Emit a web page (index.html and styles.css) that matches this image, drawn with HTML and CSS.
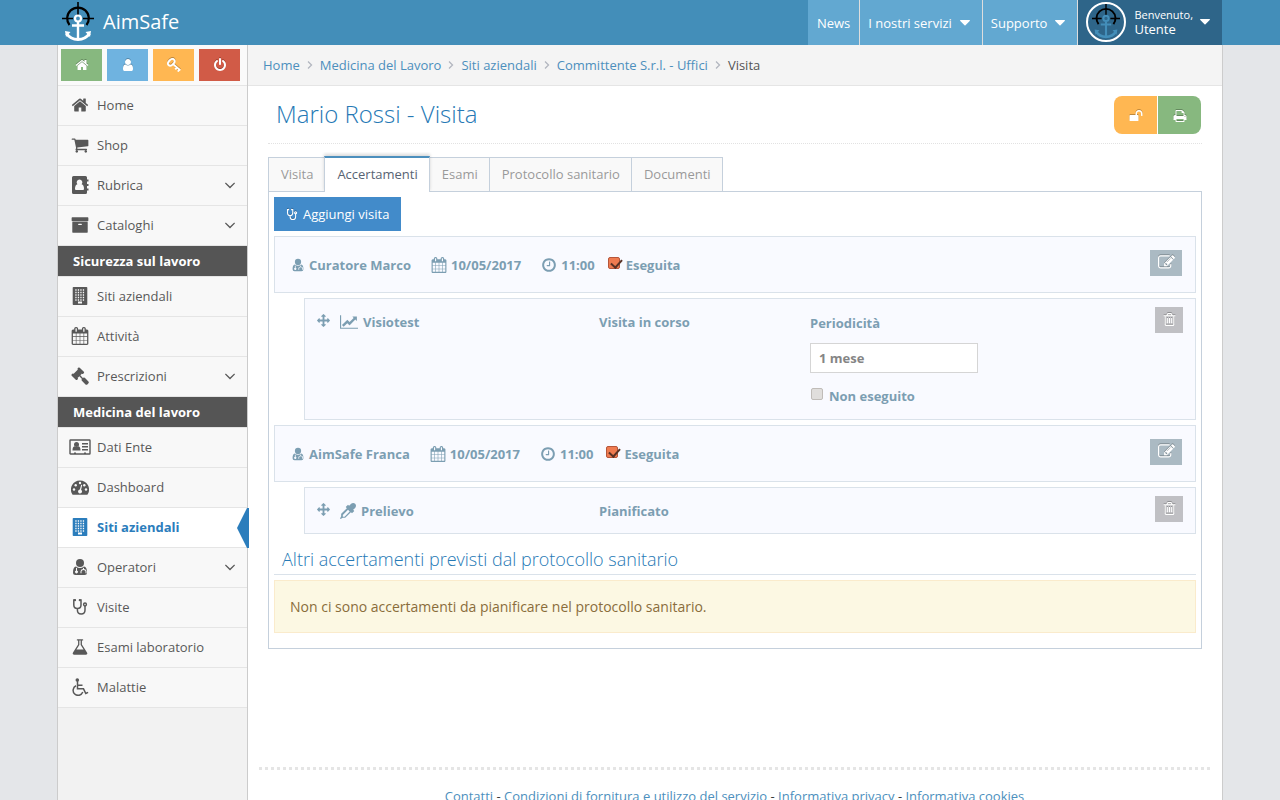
FILE: index.html
```html
<!DOCTYPE html>
<html lang="it">
<head>
<meta charset="utf-8">
<meta name="viewport" content="width=device-width, initial-scale=1">
<title>AimSafe - Visita</title>
<link rel="stylesheet" href="styles.css">
</head>
<body>
<svg class="sprite" aria-hidden="true">
  <symbol id="home" viewBox="0 0 1792 1792"><path d="M1472 992v480q0 26-19 45t-45 19h-384v-384h-256v384h-384q-26 0-45-19t-19-45v-480q0-1 .5-3t.5-3l575-474 575 474q1 2 1 6zm223-69l-62 74q-8 9-21 11h-3q-13 0-21-7l-692-577-692 577q-12 8-24 7-13-2-21-11l-62-74q-8-10-7-23.5t11-21.5l719-599q32-26 76-26t76 26l244 204v-195q0-14 9-23t23-9h192q14 0 23 9t9 23v408l219 182q10 8 11 21.5t-7 23.5z"/></symbol>
  <symbol id="user" viewBox="0 0 1792 1792"><path d="M1536 1399q0 109-62.5 187t-150.5 78h-854q-88 0-150.5-78t-62.5-187q0-85 8.500-160.500t31.500-152 58.500-131 94-89 134.500-34.500q131 128 313 128t313-128q76 0 134.500 34.500t94 89 58.500 131 31.500 152 8.500 160.500zm-256-887q0 159-112.500 271.500t-271.500 112.500-271.500-112.500-112.500-271.500 112.500-271.500 271.500-112.500 271.500 112.500 112.500 271.500z"/></symbol>
  <symbol id="key" viewBox="0 0 15 15"><g fill="none" stroke="currentColor" stroke-width="2"><ellipse cx="4.600" cy="4.600" rx="4.100" ry="2.700" transform="rotate(-45 4.600 4.600)"/><path d="M6 6l8.300 7.300M8.800 12.200l2.500-2.800M11.500 14.500l2.500-2.800"/></g></symbol>
  <symbol id="power" viewBox="0 0 1792 1792"><path d="M1664 896q0 156-61 298t-164 245-245 164-298 61-298-61-245-164-164-245-61-298q0-182 80.500-343t226.500-270q43-32 95.500-25t83.500 50q32 42 24.500 94.500t-49.500 84.500q-98 74-151.500 181t-53.500 228q0 104 40.500 198.500t109.500 163.500 163.500 109.500 198.500 40.500 198.500-40.500 163.500-109.500 109.500-163.500 40.500-198.500q0-121-53.500-228t-151.500-181q-42-32-49.500-84.500t24.500-94.500q31-43 84-50t95 25q146 109 226.500 270t80.500 343zm-640-768v640q0 52-38 90t-90 38-90-38-38-90v-640q0-52 38-90t90-38 90 38 38 90z"/></symbol>
  <symbol id="cart" viewBox="0 0 1792 1792"><path d="M704 1536q0 52-38 90t-90 38-90-38-38-90 38-90 90-38 90 38 38 90zm896 0q0 52-38 90t-90 38-90-38-38-90 38-90 90-38 90 38 38 90zm128-1088v512q0 24-16.500 42.500t-40.500 21.500l-1044 122q13 60 13 70 0 16-24 64h920q26 0 45 19t19 45-19 45-45 19h-1024q-26 0-45-19t-19-45q0-11 8-31.500t16-36 21.500-40 15.500-29.500l-177-823h-204q-26 0-45-19t-19-45 19-45 45-19h256q16 0 28.500 6.500t19.500 15.500 13 24.500 8 26 5.500 29.500 4.500 26h1201q26 0 45 19t19 45z"/></symbol>
  <symbol id="book" viewBox="0 0 18 18"><path fill-rule="evenodd" d="M2.500 0h12a1.500 1.500 0 0 1 1.500 1.500v15a1.500 1.500 0 0 1-1.500 1.500h-12a1.500 1.500 0 0 1-1.500-1.500v-15a1.500 1.500 0 0 1 1.500-1.500zM8.500 3.500a2.800 2.800 0 0 0-2.100 4.700q-2.400.5-2.400 4.800 0 1 1 1h7q1 0 1-1 0-4.300-2.400-4.800a2.800 2.800 0 0 0-2.100-4.700z"/><path d="M16 3.500h1.500v2h-1.500zM16 8h1.500v2h-1.500zM16 12.500h1.500v2h-1.500z"/></symbol>
  <symbol id="archive" viewBox="0 0 1792 1792"><path d="M1088 832q0-26-19-45t-45-19h-256q-26 0-45 19t-19 45 19 45 45 19h256q26 0 45-19t19-45zm576-192v960q0 26-19 45t-45 19h-1408q-26 0-45-19t-19-45v-960q0-26 19-45t45-19h1408q26 0 45 19t19 45zm64-448v256q0 26-19 45t-45 19h-1536q-26 0-45-19t-19-45v-256q0-26 19-45t45-19h1536q26 0 45 19t19 45z"/></symbol>
  <symbol id="building" viewBox="0 0 18 18"><path fill-rule="evenodd" d="M2.500 0h13a.8.8 0 0 1 .8.800v16.400a.8.800 0 0 1-.8.800h-13a.8.800 0 0 1-.8-.8v-16.400a.8.800 0 0 1 .8-.8zM7 14.500v2h4v-2z"/><path stroke="var(--hole)" stroke-width="1.300" stroke-dasharray="1.300 1.200" d="M4.300 3h10M4.300 5.500h10M4.300 8h10M4.300 10.500h10M4.300 13h10"/></symbol>
  <symbol id="calendar" viewBox="0 0 1792 1792"><path d="M192 1664h288v-288h-288v288zm352 0h320v-288h-320v288zm-352-352h288v-320h-288v320zm352 0h320v-320h-320v320zm-352-384h288v-288h-288v288zm736 736h320v-288h-320v288zm-384-736h320v-288h-320v288zm768 736h288v-288h-288v288zm-384-352h320v-320h-320v320zm-352-864v-288q0-13-9.500-22.500t-22.500-9.500h-64q-13 0-22.500 9.500t-9.500 22.500v288q0 13 9.500 22.500t22.500 9.500h64q13 0 22.500-9.500t9.500-22.500zm736 864h288v-320h-288v320zm-384-384h320v-288h-320v288zm384 0h288v-288h-288v288zm32-480v-288q0-13-9.500-22.500t-22.500-9.500h-64q-13 0-22.500 9.500t-9.500 22.500v288q0 13 9.500 22.500t22.500 9.500h64q13 0 22.500-9.500t9.500-22.500zm384-64v1280q0 52-38 90t-90 38h-1408q-52 0-90-38t-38-90v-1280q0-52 38-90t90-38h128v-96q0-66 47-113t113-47h64q66 0 113 47t47 113v96h384v-96q0-66 47-113t113-47h64q66 0 113 47t47 113v96h128q52 0 90 38t38 90z"/></symbol>
  <symbol id="gavel" viewBox="0 0 1792 1792"><path d="M1771 1536q0 53-37 90l-107 108q-39 37-91 37-53 0-90-37l-363-364q-38-36-38-90 0-53 43-96l-256-256-126 126q-14 14-34 14t-34-14q2 2 12.500 12t12.500 13 10 11.500 10 13.500 6 13.500 5.500 16.500 1.500 18q0 38-28 68-3 3-16.500 18t-19 20.500-18.500 16.500-22 15.500-22 9-26 4.500q-40 0-68-28l-408-408q-28-28-28-68 0-13 4.500-26t9-22 15.500-22 16.500-18.500 20.500-19 18-16.500q30-28 68-28 10 0 18 1.500t16.500 5.500 13.500 6 13.500 10 11.500 10 13 12.500 12 12.500q-14-14-14-34t14-34l348-348q14-14 34-14t34 14q-2-2-12.500-12t-12.500-13-10-11.500-10-13.500-6-13.500-5.500-16.500-1.500-18q0-38 28-68 3-3 16.500-18t19-20.500 18.500-16.500 22-15.500 22-9 26-4.500q40 0 68 28l408 408q28 28 28 68 0 13-4.500 26t-9 22-15.500 22-16.500 18.500-20.500 19-18 16.500q-30 28-68 28-10 0-18-1.500t-16.500-5.500-13.500-6-13.500-10-11.500-10-13-12.500-12-12.500q14 14 14 34t-14 34l-126 126 256 256q43-43 96-43 52 0 91 37l363 363q37 39 37 91z"/></symbol>
  <symbol id="idcard" viewBox="0 0 22 18"><path fill="none" stroke="currentColor" stroke-width="1.400" d="M1.500 2h19q.5 0 .5.500v13q0 .5-.5.500h-19q-.5 0-.5-.5v-13q0-.5.500-.5z"/><circle cx="7.500" cy="6.500" r="2.500"/><path d="M3.500 12.500q0-4 2-4.300 2 1.500 4 0 2 .3 2 4.300zM13 5h6v1.500h-6zM13 8h6v1.500h-6zM13 11h6v1.500h-6zM5 14.500h2v1.500h-2zM15 14.500h2v1.500h-2z"/></symbol>
  <symbol id="gauge" viewBox="0 0 18 18"><path d="M9 2.500a9 9 0 0 1 7.700 13.700q-.3.500-.8.500h-13.800q-.5 0-.8-.5a9 9 0 0 1 7.700-13.700z"/><g fill="var(--hole)"><circle cx="3" cy="11.500" r="1.200"/><circle cx="4.700" cy="7.200" r="1.200"/><circle cx="9" cy="5" r="1.200"/><circle cx="13.300" cy="7.200" r="1.200"/><circle cx="15" cy="11.500" r="1.200"/><path d="M10.200 6.800l1 .3-1.100 4.700a2 2 0 1 1-1.200-.3z"/></g></symbol>
  <symbol id="doctor" viewBox="0 0 16 18"><circle cx="8" cy="5" r="4"/><path fill-rule="evenodd" d="M4 8.500q4 3.200 8 0 3 .5 3 6 0 2.500-2.500 2.500h-9q-2.500 0-2.500-2.500 0-5.500 3-6zM4 9.800v2.600a1.500 1.500 0 1 0 1 0v-2.300zM11 9.800v1.300q-2.500.3-2.500 2.400v1.700h1v-1.700q0-1.500 2-1.500t2 1.500v1.700h1v-1.700q0-2.100-2.500-2.400v-1z"/></symbol>
  <symbol id="stetho" viewBox="0 0 16 18"><g fill="none" stroke="currentColor" stroke-width="1.500"><path d="M3.500 2h-1.700v5q0 3.500 3.600 3.500t3.600-3.500v-5h-1.700M5.400 10.500v1.500q0 4 3.800 4t3.800-4v-4"/><circle cx="13" cy="6.500" r="1.400"/></g><circle cx="3" cy="2.200" r="1.100"/><circle cx="7.800" cy="2.200" r="1.100"/></symbol>
  <symbol id="flask" viewBox="0 0 1792 1792"><path d="M1591 1448q56 89 21.500 152.500t-140.500 63.500h-1152q-106 0-140.500-63.500t21.500-152.500l503-793v-399h-64q-26 0-45-19t-19-45 19-45 45-19h512q26 0 45 19t19 45-19 45-45 19h-64v399zm-779-725l-272 429h712l-272-429-20-31v-436h-128v436z"/></symbol>
  <symbol id="wheelchair" viewBox="0 0 18 18"><circle cx="6.300" cy="2" r="1.800"/><g fill="none" stroke="currentColor" stroke-width="1.500"><path d="M6.500 3v7.800h6l2.300 4.700 2.300-1.100M6.500 7.200h5M5 7.800a5 5 0 1 0 6.800 6.300"/></g></symbol>
  <symbol id="down" viewBox="0 0 1792 1792"><path d="M1395 736q0 13-10 23l-466 466q-10 10-23 10t-23-10l-466-466q-10-10-10-23t10-23l50-50q10-10 23-10t23 10l393 393 393-393q10-10 23-10t23 10l50 50q10 10 10 23z"/></symbol>
  <symbol id="right" viewBox="0 0 8 14"><path fill="none" stroke="currentColor" stroke-width="1.300" d="M2 3.500l3.500 3.500-3.500 3.500"/></symbol>
  <symbol id="caret" viewBox="0 0 10 6"><path d="M.5 0h9q.8.300.2 1l-4.200 4.200q-.5.400-1 0l-4.200-4.200q-.6-.7.200-1z"/></symbol>
  <symbol id="clock" viewBox="0 0 1792 1792"><path d="M1024 544v448q0 14-9 23t-23 9h-320q-14 0-23-9t-9-23v-64q0-14 9-23t23-9h224v-352q0-14 9-23t23-9h64q14 0 23 9t9 23zm416 352q0-148-73-273t-198-198-273-73-273 73-198 198-73 273 73 273 198 198 273 73 273-73 198-198 73-273zm224 0q0 209-103 385.500t-279.500 279.500-385.500 103-385.500-103-279.500-279.500-103-385.500 103-385.500 279.500-279.500 385.500-103 385.500 103 279.500 279.500 103 385.500z"/></symbol>
  <symbol id="move" viewBox="0 0 1792 1792"><path d="M1792 896q0 26-19 45l-256 256q-19 19-45 19t-45-19-19-45v-128h-384v384h128q26 0 45 19t19 45-19 45l-256 256q-19 19-45 19t-45-19l-256-256q-19-19-19-45t19-45 45-19h128v-384h-384v128q0 26-19 45t-45 19-45-19l-256-256q-19-19-19-45t19-45l256-256q19-19 45-19t45 19 19 45v128h384v-384h-128q-26 0-45-19t-19-45 19-45l256-256q19-19 45-19t45 19l256 256q19 19 19 45t-19 45-45 19h-128v384h384v-128q0-26 19-45t45-19 45 19l256 256q19 19 19 45z"/></symbol>
  <symbol id="chart" viewBox="0 0 2048 1792"><path d="M2048 1536v128h-2048v-1536h128v1408h1920zm-128-1248v435q0 21-19.500 29.500t-35.500-7.500l-121-121-633 633q-10 10-23 10t-23-10l-233-233-416 416-192-192 585-585q10-10 23-10t23 10l233 233 464-464-121-121q-16-16-7.500-35.500t29.500-19.500h435q14 0 23 9t9 23z"/></symbol>
  <symbol id="dropper" viewBox="0 0 1792 1792"><path d="M1698 94q94 94 94 226.500t-94 225.500l-225 223 104 104q10 10 10 23t-10 23l-210 210q-10 10-23 10t-23-10l-105-105-603 603q-37 37-90 37h-203l-256 128-64-64 128-256v-203q0-53 37-90l603-603-105-105q-10-10-10-23t10-23l210-210q10-10 23-10t23 10l104 104 223-225q93-94 225.500-94t226.500 94zm-1186 1442l576-576-192-192-576 576v192h192z"/></symbol>
  <symbol id="trash" viewBox="0 0 1792 1792"><path d="M704 736v576q0 14-9 23t-23 9h-64q-14 0-23-9t-9-23v-576q0-14 9-23t23-9h64q14 0 23 9t9 23zm256 0v576q0 14-9 23t-23 9h-64q-14 0-23-9t-9-23v-576q0-14 9-23t23-9h64q14 0 23 9t9 23zm256 0v576q0 14-9 23t-23 9h-64q-14 0-23-9t-9-23v-576q0-14 9-23t23-9h64q14 0 23 9t9 23zm128 724v-948h-896v948q0 22 7 40.500t14.500 27 10.500 8.500h832q3 0 10.500-8.500t14.500-27 7-40.500zm-672-1076h448l-48-117q-7-9-17-11h-317q-10 2-17 11zm928 32v64q0 14-9 23t-23 9h-96v948q0 83-47 143.500t-113 60.500h-832q-66 0-113-58.500t-47-141.500v-952h-96q-14 0-23-9t-9-23v-64q0-14 9-23t23-9h309l70-167q15-37 54-63t79-26h320q40 0 79 26t54 63l70 167h309q14 0 23 9t9 23z"/></symbol>
  <symbol id="edit" viewBox="0 0 1792 1792"><path d="M888 1184l116-116-152-152-116 116v56h96v96h56zm440-720q-16-16-33 1l-350 350q-17 17-1 33t33-1l350-350q17-17 1-33zm80 594v190q0 119-84.500 203.500t-203.500 84.500h-832q-119 0-203.500-84.500t-84.500-203.500v-832q0-119 84.500-203.500t203.500-84.500h832q63 0 117 25 15 7 18 23 3 17-9 29l-49 49q-14 14-32 8-23-6-45-6h-832q-66 0-113 47t-47 113v832q0 66 47 113t113 47h832q66 0 113-47t47-113v-126q0-13 9-22l64-64q15-15 35-7t20 29zm-96-738l288 288-672 672h-288v-288zm444 132l-92 92-288-288 92-92q28-28 68-28t68 28l152 152q28 28 28 68t-28 68z"/></symbol>
  <symbol id="print" viewBox="0 0 1792 1792"><path d="M448 1536h896v-256h-896v256zm0-640h896v-384h-160q-40 0-68-28t-28-68v-160h-640v640zm1152 64q0-26-19-45t-45-19-45 19-19 45 19 45 45 19 45-19 19-45zm128 0v416q0 13-9.500 22.500t-22.500 9.500h-224v160q0 40-28 68t-68 28h-960q-40 0-68-28t-28-68v-160h-224q-13 0-22.500-9.500t-9.500-22.500v-416q0-79 56.500-135.500t135.500-56.500h64v-544q0-40 28-68t68-28h672q40 0 88 20t76 48l152 152q28 28 48 76t20 88v256h64q79 0 135.500 56.500t56.500 135.500z"/></symbol>
  <symbol id="unlock" viewBox="0 0 1792 1792"><path d="M1728 576v256q0 26-19 45t-45 19h-64q-26 0-45-19t-19-45v-256q0-106-75-181t-181-75-181 75-75 181v192h96q40 0 68 28t28 68v576q0 40-28 68t-68 28h-960q-40 0-68-28t-28-68v-576q0-40 28-68t68-28h672v-192q0-185 131.500-316.500t316.500-131.500 316.500 131.500 131.500 316.500z"/></symbol>
  <symbol id="anchor" viewBox="0 0 34 40"><g fill="none" stroke="#000"><path stroke-width="2.200" d="M8.500 23a10.800 10.800 0 1 1 17 0"/><path stroke-width="1.600" d="M17 0v13M1 16.500h11M22 16.500h11"/></g><g fill="none" stroke="currentColor"><circle cx="17" cy="16.500" r="3" stroke-width="2.200"/><path stroke-width="2.400" d="M17 20v17M11 23.500h12"/><path stroke-width="3" d="M5.500 31.500q4 6 11.500 6t11.500-6"/></g><path fill="currentColor" d="M4 29l5.500 1-4.500 5zM30 29l-5.500 1 4.500 5z"/></symbol>
</svg>

<header class="navbar">
  <div class="frame navbar-in">
    <a class="brand" href="#"><svg class="brand-logo"><use href="#anchor"/></svg>AimSafe</a>
    <nav class="topnav">
      <a href="#">News</a>
      <a href="#">I nostri servizi<svg class="caret"><use href="#caret"/></svg></a>
      <a href="#">Supporto<svg class="caret"><use href="#caret"/></svg></a>
      <a class="account" href="#">
        <span class="avatar"><svg><use href="#anchor"/></svg></span>
        <span class="who"><small>Benvenuto,</small>Utente</span>
        <svg class="caret"><use href="#caret"/></svg>
      </a>
    </nav>
  </div>
</header>

<div class="frame main">
  <aside class="sidebar">
    <div class="shortcuts">
      <button class="green" aria-label="Home"><svg class="i14"><use href="#home"/></svg></button>
      <button class="sky" aria-label="Profilo"><svg class="i14"><use href="#user"/></svg></button>
      <button class="orange" aria-label="Password"><svg class="i14"><use href="#key"/></svg></button>
      <button class="red" aria-label="Esci"><svg class="i14"><use href="#power"/></svg></button>
    </div>
    <nav class="menu">
      <a href="#"><svg><use href="#home"/></svg>Home</a>
      <a href="#"><svg><use href="#cart"/></svg>Shop</a>
      <a href="#"><svg><use href="#book"/></svg>Rubrica<svg class="more"><use href="#down"/></svg></a>
      <a href="#"><svg><use href="#archive"/></svg>Cataloghi<svg class="more"><use href="#down"/></svg></a>
      <h2>Sicurezza sul lavoro</h2>
      <a href="#"><svg><use href="#building"/></svg>Siti aziendali</a>
      <a href="#"><svg><use href="#calendar"/></svg>Attività</a>
      <a href="#"><svg><use href="#gavel"/></svg>Prescrizioni<svg class="more"><use href="#down"/></svg></a>
      <h2>Medicina del lavoro</h2>
      <a href="#"><svg class="wide"><use href="#idcard"/></svg>Dati Ente</a>
      <a href="#"><svg><use href="#gauge"/></svg>Dashboard</a>
      <a href="#" class="active"><svg><use href="#building"/></svg>Siti aziendali</a>
      <a href="#"><svg><use href="#doctor"/></svg>Operatori<svg class="more"><use href="#down"/></svg></a>
      <a href="#"><svg><use href="#stetho"/></svg>Visite</a>
      <a href="#"><svg><use href="#flask"/></svg>Esami laboratorio</a>
      <a href="#"><svg><use href="#wheelchair"/></svg>Malattie</a>
    </nav>
  </aside>

  <div class="content">
    <nav class="crumbs">
      <a href="#">Home</a><svg><use href="#right"/></svg>
      <a href="#">Medicina del Lavoro</a><svg><use href="#right"/></svg>
      <a href="#">Siti aziendali</a><svg><use href="#right"/></svg>
      <a href="#">Committente S.r.l. - Uffici</a><svg><use href="#right"/></svg>
      <span>Visita</span>
    </nav>
    <main class="page">
      <div class="page-head">
        <h1>Mario Rossi - Visita</h1>
        <div class="tools">
          <button class="orange" aria-label="Sblocca"><svg class="i14"><use href="#unlock"/></svg></button>
          <button class="green" aria-label="Stampa"><svg class="i14"><use href="#print"/></svg></button>
        </div>
      </div>
      <nav class="tabs">
        <a href="#">Visita</a>
        <a href="#" class="current">Accertamenti</a>
        <a href="#">Esami</a>
        <a href="#">Protocollo sanitario</a>
        <a href="#">Documenti</a>
      </nav>
      <section class="pane">
        <button class="add"><svg><use href="#stetho"/></svg>Aggiungi visita</button>

        <article class="visit">
          <span class="item"><svg class="i14"><use href="#doctor"/></svg>Curatore Marco</span>
          <span class="item"><svg class="i16"><use href="#calendar"/></svg>10/05/2017</span>
          <span class="item"><svg class="i16"><use href="#clock"/></svg>11:00</span>
          <label class="tick"><input type="checkbox" checked>Eseguita</label>
          <button class="edit" aria-label="Modifica"><svg><use href="#edit"/></svg></button>
        </article>
        <article class="exam">
          <div class="name"><svg class="i14"><use href="#move"/></svg><svg class="chart"><use href="#chart"/></svg>Visiotest</div>
          <div class="state">Visita in corso</div>
          <div class="period">
            <label for="periodicita">Periodicità</label>
            <input id="periodicita" type="text" value="1 mese">
            <label class="tick"><input type="checkbox">Non eseguito</label>
          </div>
          <button class="trash" aria-label="Elimina"><svg><use href="#trash"/></svg></button>
        </article>

        <article class="visit">
          <span class="item"><svg class="i14"><use href="#doctor"/></svg>AimSafe Franca</span>
          <span class="item"><svg class="i16"><use href="#calendar"/></svg>10/05/2017</span>
          <span class="item"><svg class="i16"><use href="#clock"/></svg>11:00</span>
          <label class="tick"><input type="checkbox" checked>Eseguita</label>
          <button class="edit" aria-label="Modifica"><svg><use href="#edit"/></svg></button>
        </article>
        <article class="exam">
          <div class="name"><svg class="i14"><use href="#move"/></svg><svg class="i16"><use href="#dropper"/></svg>Prelievo</div>
          <div class="state">Pianificato</div>
          <div class="period"></div>
          <button class="trash" aria-label="Elimina"><svg><use href="#trash"/></svg></button>
        </article>

        <h2 class="sub">Altri accertamenti previsti dal protocollo sanitario</h2>
        <p class="notice">Non ci sono accertamenti da pianificare nel protocollo sanitario.</p>
      </section>
    </main>
    <footer class="foot">
      <a href="#">Contatti</a> - <a href="#">Condizioni di fornitura e utilizzo del servizio</a> - <a href="#">Informativa privacy</a> - <a href="#">Informativa cookies</a>
    </footer>
  </div>
</div>
</body>
</html>
```
FILE: styles.css
```css
* { box-sizing: border-box; }
body {
  margin: 0;
  min-height: 100vh;
  display: flex;
  flex-direction: column;
  background: #e4e6e9;
  color: #393939;
  font: 13px/20px "Open Sans", sans-serif;
}
a { color: #4c8fbd; text-decoration: none; }
button { border: 0; padding: 0; color: #fff; font: inherit; cursor: pointer; }
svg { fill: currentColor; flex: none; }
.sprite { display: none; }
.i14 { width: 14px; height: 14px; }
.i16 { width: 16px; height: 16px; }
button svg { filter: drop-shadow(0 -1px 0 rgba(0, 0, 0, .25)); }
.green { background: #87b87f; }
.sky { background: #6fb3e0; }
.orange { background: #ffb752; }
.red { background: #d15b47; }

.frame { width: 100%; max-width: 1166px; margin: 0 auto; }

/* top bar */
.navbar { background: #438eb9; }
.navbar-in { display: flex; justify-content: space-between; height: 45px; padding: 0 1px; }
.brand { display: flex; align-items: center; gap: 8px; padding: 0 0 2px 3px; color: #fff; font-size: 20px; }
.brand-logo { width: 34px; height: 40px; }
.topnav { display: flex; }
.topnav a { display: flex; align-items: center; padding: 0 8px; background: #62a8d1; color: #fff; border-left: 1px solid #ddd; }
.topnav a:first-child { border-left: 0; padding: 0 9px; }
.topnav a.account { background: #2e6589; padding: 0 12px 2px 8px; }
.caret { width: 10px; height: 6px; margin: 0 4px 0 8px; }
.account .caret { margin: 0 0 0 7px; }
.avatar { display: flex; align-items: center; justify-content: center; width: 40px; height: 40px; margin-right: 8px; border: 2px solid #fff; border-radius: 50%; color: #438eb9; }
.avatar svg { width: 30px; height: 35px; }
.who { line-height: 15px; }
.who small { display: block; font-size: 11px; }

/* sidebar */
.main { flex: 1; display: flex; background: #fff; border: solid #ccc; border-width: 0 1px; }
.sidebar { width: 190px; flex: none; background: #f2f2f2; border-right: 1px solid #ccc; }
.shortcuts { display: grid; grid-template-columns: repeat(4, 41px); gap: 5px; height: 41px; padding: 4px 3px; background: #fafafa; border-bottom: 1px solid #e5e5e5; }
.shortcuts button { display: flex; align-items: center; justify-content: center; height: 32px; }
.menu { --hole: #f8f8f8; }
.menu a { display: flex; align-items: center; height: 40px; padding: 0 10px 2px 13px; background: #f8f8f8; color: #585858; border-bottom: 1px solid #e5e5e5; }
.menu svg { width: 18px; height: 18px; margin-right: 8px; }
.menu .wide { width: 22px; margin: 0 6px 0 -2px; }
.menu .more { margin: 0 -2px 0 auto; }
.menu h2 { margin: 0; padding-left: 15px; height: 31px; background: #555; border-bottom: 1px solid #e5e5e5; color: #fff; font-size: 13px; line-height: 30px; }
.menu a.active { position: relative; background: #fff; color: #2b7dbc; font-weight: 700; }
.active::after { content: ""; position: absolute; top: 0; bottom: -1px; right: -2px; width: 12px; background: #2b7dbc; clip-path: polygon(0 50%, 10px 0, 100% 0, 100% 100%, 10px 100%); }

/* content */
.content { flex: 1; min-width: 0; display: flex; flex-direction: column; }
.crumbs { display: flex; align-items: center; height: 41px; padding: 0 15px; background: #f4f4f4; border-bottom: 1px solid #e5e5e5; color: #555; }
.crumbs svg { width: 8px; height: 14px; margin: 0 6px; color: #b2b6bf; }
.page { flex: 1; padding: 10px 20px 0; }
.page-head { display: flex; justify-content: space-between; align-items: flex-start; height: 48px; margin-bottom: 12px; border-bottom: 1px dotted #e2e2e2; }
h1 { margin: 0; padding: 0 8px; color: #2679b5; font-size: 24px; font-weight: 300; line-height: 35px; }
.tools { display: flex; gap: 1px; margin-right: 1px; }
.tools button { width: 43px; height: 38px; padding-bottom: 2px; }
.tools button:first-child { border-radius: 8px 0 0 8px; }
.tools button:last-child { border-radius: 0 8px 8px 0; }
.tools svg { vertical-align: middle; }

.tabs { display: flex; padding-top: 1px; }
.tabs a { padding: 6px 11px 7px 12px; line-height: 20px; background: #f9f9f9; color: #999; border: 1px solid #c5d0dc; border-width: 1px 0 0 1px; }
.tabs a:last-child { border-right-width: 1px; }
.tabs .current { position: relative; margin: -1px -1px -1px 0; border-top: 2px solid #4c8fbd; border-right-width: 1px; background: #fff; color: #576373; box-shadow: 0 -2px 3px rgba(0, 0, 0, .15); clip-path: inset(-4px -4px 0 -4px); }
.pane { border: 1px solid #c5d0dc; padding: 5px 5px 15px; }

.add { display: flex; align-items: center; gap: 5px; height: 34px; padding: 0 12px; background: #428bca; }
.add svg { width: 12px; height: 13px; }

.visit, .exam { margin-top: 5px; background: #f9faff; border: 1px solid #dae2ea; color: #7c9eb2; font-weight: 700; }
.visit { display: flex; align-items: center; height: 57px; padding: 0 13px 0 16px; }
.visit .item { display: flex; align-items: center; gap: 4px; margin-right: 20px; }
.visit .item:nth-child(3) { margin-right: 12px; }
.tick { display: flex; align-items: center; gap: 5px; }
.edit, .trash { display: flex; align-items: center; justify-content: center; height: 26px; padding-bottom: 1px; }
.edit { width: 32px; margin: 0 0 4px auto; background: #abbac3; }
.edit svg { width: 17px; height: 17px; }
.exam { display: grid; grid-template-columns: 282px 211px 1fr auto; align-items: start; margin-left: 30px; padding: 8px 12px 11px; }
.exam .name { display: flex; align-items: center; margin-top: 5px; }
.name svg { margin-right: 5px; }
.name .i14 { margin: 0 10px 3px 0; width: 13px; height: 13px; }
.name .chart { width: 18px; height: 16px; }
.exam .state { margin-top: 5px; }
.period { margin: 6px 0 2px; }
.period:empty { margin: 0; }
.period > label { display: flex; }
.period input[type=text] { display: block; width: 168px; height: 30px; margin: 10px 0 13px; padding: 0 8px; border: 1px solid #d5d5d5; color: #858585; font: inherit; }
.trash { width: 28px; background: #c0c0c4; }
.trash svg { width: 15px; height: 15px; }

input[type=checkbox] { appearance: none; position: relative; width: 12px; height: 12px; margin: 0 1px 4px; border: 1px solid #c0bcb8; border-radius: 2px; background: #e0dedc; }
input[type=checkbox]:checked { border-color: #b5563a; background: #ef7b50; }
input[type=checkbox]:checked::after { content: ""; position: absolute; left: 4px; top: -1px; width: 5px; height: 9px; border: solid #5a3226; border-width: 0 2px 2px 0; transform: rotate(42deg); }

.sub { margin: 10px 0 5px; padding: 0 8px; height: 31px; line-height: 30px; border-bottom: 1px solid #dae2ea; color: #2679b5; font-size: 18px; font-weight: 300; }
.notice { margin: 0; padding: 16px 15px; border: 1px solid #faebcc; background: #fcf8e3; color: #8a6d3b; font-size: 14px; line-height: 19px; }
.foot { margin: 118px 12px 0 11px; padding-top: 16px; border-top: 3px dotted #e5e5e5; text-align: center; }
```
